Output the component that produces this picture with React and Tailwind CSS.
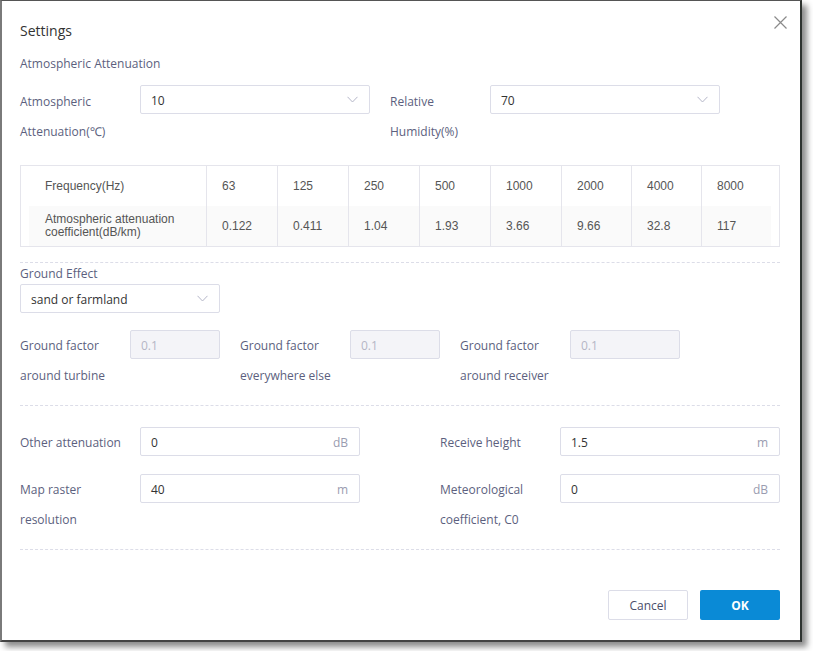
import React from "react";

const LBL = "text-[12px] text-[#5c5f7e]";

function Chevron() {
  return (
    <svg width="11" height="7" viewBox="0 0 11 7" className="shrink-0">
      <path d="M0.5 0.8 L5.5 6 L10.5 0.8" fill="none" stroke="#b4b6c8" strokeWidth="1" />
    </svg>
  );
}

function Select({ value, w }) {
  return (
    <div className={`${w} h-[29px] border border-[#dcdde8] rounded-[2px] bg-white flex items-center justify-between pl-[10px] pr-[11px]`}>
      <span className="text-[12px] text-[#333] pt-[2px]">{value}</span>
      <Chevron />
    </div>
  );
}

function Input({ value, unit, w, disabled }) {
  return (
    <div
      className={`${w} h-[29px] border rounded-[2px] flex items-center justify-between pl-[10px] pr-[11px] pt-[2px] ${
        disabled ? "bg-[#f4f4f8] border-[#dcdde8]" : "bg-white border-[#dcdde8]"
      }`}
    >
      <span className={`text-[12px] ${disabled ? "text-[#b4b6c6]" : "text-[#333]"}`}>{value}</span>
      {unit && <span className="text-[12px] text-[#9a9cb0]">{unit}</span>}
    </div>
  );
}

function Dashed() {
  return <div className="border-t border-dashed border-[#dcdde8]" />;
}

const freqs = ["63", "125", "250", "500", "1000", "2000", "4000", "8000"];
const coeffs = ["0.122", "0.411", "1.04", "1.93", "3.66", "9.66", "32.8", "117"];
const widths = ["w-[71px]", "w-[71px]", "w-[71px]", "w-[71px]", "w-[71px]", "w-[70px]", "w-[70px]", "w-[69px]"];

export default function App() {
  return (
    <div className="w-[813px] h-[651px] bg-white" style={{ fontFamily: '"Open Sans", "Noto Sans", sans-serif' }}>
      <div className="w-[802px] h-[642px] bg-white border-l-2 border-t border-r-2 border-b-2 border-l-[#7a7a7a] border-t-[#555] border-r-[#2e3330] border-b-[#444] shadow-[5px_5px_6px_rgba(0,0,0,0.45)] pl-[18px] pr-[20px] flex flex-col">
        {/* header */}
        <div className="flex items-start justify-between pt-[20px]">
          <div className="text-[14px] leading-[20px] font-medium text-[#333]">Settings</div>
          <svg width="13" height="13" viewBox="0 0 13 13" className="mt-[-5px] mr-[-7px]">
            <path d="M0.5 0.5 L12.5 12.5 M12.5 0.5 L0.5 12.5" stroke="#8a8a8a" strokeWidth="1.2" />
          </svg>
        </div>

        <div className={`${LBL} leading-[20px] mt-[13px]`}>Atmospheric Attenuation</div>

        <div className="flex items-start mt-[11px]">
          <div className={`${LBL} leading-[30px] w-[120px] pt-[2px]`}>
            <div>Atmospheric</div>
            <div>Attenuation(℃)</div>
          </div>
          <Select value="10" w="w-[230px]" />
          <div className={`${LBL} leading-[30px] w-[100px] ml-[20px] pt-[2px]`}>
            <div>Relative</div>
            <div>Humidity(%)</div>
          </div>
          <Select value="70" w="w-[230px]" />
        </div>

        {/* table */}
        <div
          className="mt-[18px] border border-[#e5e5ec] px-[8px] text-[12px] text-[#555]"
          style={{ fontFamily: '"Liberation Sans", Arial, sans-serif' }}
        >
          <div className="flex h-[40px] items-center">
            <div className="w-[177px] pl-[16px]">Frequency(Hz)</div>
            {freqs.map((f, i) => (
              <div key={f} className={`${widths[i]} h-full border-l border-[#e5e5ec] pl-[15px] flex items-center`}>
                {f}
              </div>
            ))}
          </div>
          <div className="flex h-[40px] items-center bg-[#fafafa]">
            <div className="w-[177px] pl-[16px] leading-[13px]">
              <div>Atmospheric attenuation</div>
              <div>coefficient(dB/km)</div>
            </div>
            {coeffs.map((c, i) => (
              <div key={i} className={`${widths[i]} h-full border-l border-[#e5e5ec] pl-[15px] flex items-center`}>
                {c}
              </div>
            ))}
          </div>
        </div>

        <div className="mt-[15px]">
          <Dashed />
        </div>

        <div className={`${LBL} leading-[20px] mt-[1px]`}>Ground Effect</div>
        <div>
          <Select value="sand or farmland" w="w-[200px]" />
        </div>

        <div className="flex items-start mt-[17px]">
          <div className={`${LBL} leading-[30px] w-[110px] pt-[1px]`}>
            <div>Ground factor</div>
            <div>around turbine</div>
          </div>
          <Input value="0.1" w="w-[90px]" disabled />
          <div className={`${LBL} leading-[30px] w-[110px] ml-[20px] pt-[1px]`}>
            <div>Ground factor</div>
            <div>everywhere else</div>
          </div>
          <Input value="0.1" w="w-[90px]" disabled />
          <div className={`${LBL} leading-[30px] w-[110px] ml-[20px] pt-[1px]`}>
            <div>Ground factor</div>
            <div>around receiver</div>
          </div>
          <Input value="0.1" w="w-[110px]" disabled />
        </div>

        <div className="mt-[14px]">
          <Dashed />
        </div>

        <div className="grid grid-cols-2 gap-x-[80px] mt-[21px]">
          <div className="flex flex-col">
            <div className="flex items-start">
              <div className={`${LBL} leading-[30px] w-[120px] pt-[1px]`}>Other attenuation</div>
              <Input value="0" unit="dB" w="w-[220px]" />
            </div>
            <div className="flex items-start mt-[16px]">
              <div className={`${LBL} leading-[30px] w-[120px] pt-[1px]`}>
                <div>Map raster</div>
                <div>resolution</div>
              </div>
              <Input value="40" unit="m" w="w-[220px]" />
            </div>
          </div>
          <div className="flex flex-col">
            <div className="flex items-start">
              <div className={`${LBL} leading-[30px] w-[120px] pt-[1px]`}>Receive height</div>
              <Input value="1.5" unit="m" w="w-[220px]" />
            </div>
            <div className="flex items-start mt-[16px]">
              <div className={`${LBL} leading-[30px] w-[120px] pt-[1px]`}>
                <div>Meteorological</div>
                <div>coefficient, C0</div>
              </div>
              <Input value="0" unit="dB" w="w-[220px]" />
            </div>
          </div>
        </div>

        <div className="mt-[14px]">
          <Dashed />
        </div>

        <div className="flex justify-end gap-[12px] mt-[40px]">
          <button className="w-[80px] h-[30px] border border-[#dcdde8] rounded-[2px] bg-white text-[12px] text-[#4a4e6a] pt-[2px]">
            Cancel
          </button>
          <button className="w-[80px] h-[30px] rounded-[2px] bg-[#0a8ad6] text-[12px] font-bold text-white pt-[2px]">
            OK
          </button>
        </div>
      </div>
    </div>
  );
}
